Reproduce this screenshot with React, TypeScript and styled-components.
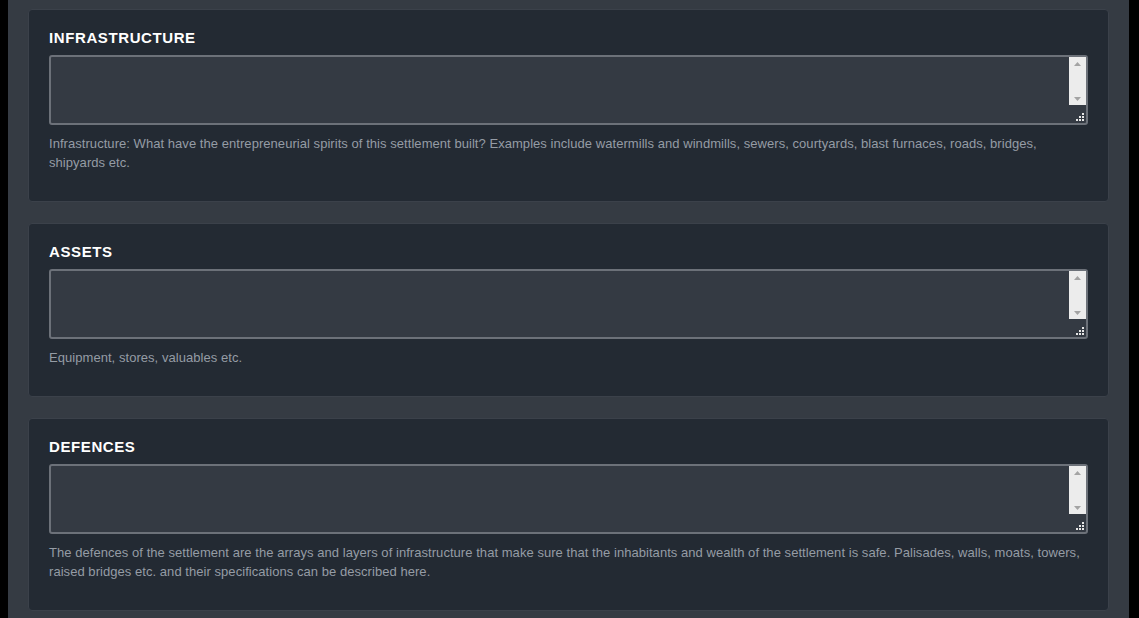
import React from "react";
import styled, { createGlobalStyle } from "styled-components";

const Global = createGlobalStyle`
  html, body { margin: 0; padding: 0; background: #000; }
  body { font-family: "Liberation Sans", Arial, sans-serif; }
`;

const Page = styled.div`
  margin-left: 8px;
  width: 1121px;
  min-height: 618px;
  box-sizing: border-box;
  background: #353b43;
  padding: 9px 20px 20px;
  display: flex;
  flex-direction: column;
  gap: 21px;
`;

const Panel = styled.section`
  background: #232a33;
  border: 1px solid #3b414a;
  border-radius: 4px;
  padding: 19px 20px 29px;
`;

const Heading = styled.h3`
  margin: 0 0 8px;
  font-family: "Liberation Sans", Arial, sans-serif;
  font-weight: bold;
  font-size: 15px;
  line-height: 18px;
  letter-spacing: 0.6px;
  color: #ffffff;
  text-transform: uppercase;
`;

const FieldWrap = styled.div`
  position: relative;
  height: 70px;
`;

const Area = styled.textarea`
  display: block;
  width: 100%;
  height: 100%;
  box-sizing: border-box;
  margin: 0;
  resize: none;
  overflow: hidden;
  background: #343a43;
  border: 2px solid #6c7179;
  border-radius: 3px;
  color: #ddd;
  outline: none;
  font: 13px "Liberation Sans", Arial, sans-serif;
  padding: 4px 6px;
`;

const Scrollbar = styled.div`
  position: absolute;
  top: 2px;
  right: 2px;
  width: 17px;
  height: 48px;
  background: #ececec;
  display: flex;
  flex-direction: column;
  justify-content: space-between;
  align-items: center;
  padding: 5px 0 4px;
  box-sizing: border-box;
`;

const Grip = styled.svg`
  position: absolute;
  right: 4px;
  bottom: 4px;
`;

const Help = styled.p`
  margin: 9px 0 0;
  font-family: "Liberation Sans", Arial, sans-serif;
  font-size: 13px;
  line-height: 19px;
  letter-spacing: 0.05px;
  color: #959ca5;
`;

const Arrow = ({ up }: { up?: boolean }) => (
  <svg width="7" height="4" viewBox="0 0 7 4">
    {up ? (
      <polygon points="3.5,0 7,4 0,4" fill="#a3a3a3" />
    ) : (
      <polygon points="0,0 7,0 3.5,4" fill="#a3a3a3" />
    )}
  </svg>
);

const Field = () => (
  <FieldWrap>
    <Area />
    <Scrollbar>
      <Arrow up />
      <Arrow />
    </Scrollbar>
    <Grip width="9" height="8" viewBox="0 0 9 8">
      <rect x="7" y="0" width="2" height="2" fill="#e6e6e6" />
      <rect x="4" y="3" width="2" height="2" fill="#e6e6e6" />
      <rect x="7" y="3" width="2" height="2" fill="#e6e6e6" />
      <rect x="1" y="6" width="2" height="2" fill="#e6e6e6" />
      <rect x="4" y="6" width="2" height="2" fill="#e6e6e6" />
      <rect x="7" y="6" width="2" height="2" fill="#e6e6e6" />
    </Grip>
  </FieldWrap>
);

const sections = [
  {
    title: "Infrastructure",
    help:
      "Infrastructure: What have the entrepreneurial spirits of this settlement built? Examples include watermills and windmills, sewers, courtyards, blast furnaces, roads, bridges, shipyards etc.",
  },
  { title: "Assets", help: "Equipment, stores, valuables etc." },
  {
    title: "Defences",
    help:
      "The defences of the settlement are the arrays and layers of infrastructure that make sure that the inhabitants and wealth of the settlement is safe. Palisades, walls, moats, towers, raised bridges etc. and their specifications can be described here.",
  },
];

export default function App() {
  return (
    <>
      <Global />
      <Page>
        {sections.map((s) => (
          <Panel key={s.title}>
            <Heading>{s.title}</Heading>
            <Field />
            <Help>{s.help}</Help>
          </Panel>
        ))}
      </Page>
    </>
  );
}
